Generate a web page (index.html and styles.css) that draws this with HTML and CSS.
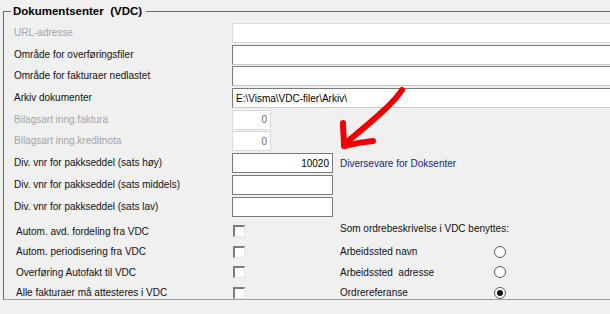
FILE: index.html
```html
<!DOCTYPE html>
<html lang="no">
<head>
    <meta charset="UTF-8">
    <title>Dokumentsenter (VDC)</title>
    <link rel="stylesheet" href="styles.css">
</head>
<body>
    <fieldset class="group">
        <legend>Dokumentsenter &nbsp;(VDC)</legend>

        <div class="fields">
            <label class="disabled">URL-adresse</label>
            <input class="wide" type="text" disabled>

            <label>Område for overføringsfiler</label>
            <input class="wide" type="text">

            <label>Område for fakturaer nedlastet</label>
            <input class="wide" type="text">

            <label>Arkiv dokumenter</label>
            <input class="wide" type="text" value="E:\Visma\VDC-filer\Arkiv\">

            <label class="disabled">Bilagsart inng.faktura</label>
            <input class="small num" type="text" value="0" disabled>

            <label class="disabled">Bilagsart inng.kreditnota</label>
            <input class="small num" type="text" value="0" disabled>

            <label>Div. vnr for pakkseddel (sats høy)</label>
            <div class="with-note">
                <input class="medium num" type="text" value="10020">
                <span class="note">Diversevare for Doksenter</span>
            </div>

            <label>Div. vnr for pakkseddel (sats middels)</label>
            <input class="medium num" type="text">

            <label>Div. vnr for pakkseddel (sats lav)</label>
            <input class="medium num" type="text">
        </div>

        <div class="options">
            <span class="opt-label">Autom. avd. fordeling fra VDC</span>
            <span class="check"></span>
            <span class="radio-head">Som ordrebeskrivelse i VDC benyttes:</span>

            <span class="opt-label">Autom. periodisering fra VDC</span>
            <span class="check"></span>
            <span>Arbeidssted navn</span>
            <span class="radio"></span>

            <span class="opt-label">Overføring Autofakt til VDC</span>
            <span class="check"></span>
            <span>Arbeidssted &nbsp;adresse</span>
            <span class="radio"></span>

            <span class="opt-label">Alle fakturaer må attesteres i VDC</span>
            <span class="check"></span>
            <span>Ordrereferanse</span>
            <span class="radio checked"></span>
        </div>
    </fieldset>

    <!-- markering lagt over skjermbildet -->
    <svg class="arrow" width="610" height="314" viewBox="0 0 610 314">
        <path d="M402 90 C393 104 372 121 347 142" />
        <path d="M343 123 C343 130 344 138 344 146 C352 144 362 142 373 141" />
    </svg>
</body>
</html>
```

FILE: styles.css
```css
html, body {
    margin: 0;
    height: 100%;
}

body {
    background: #f0f0f0;
    font-family: "Liberation Sans", Arial, sans-serif;
    font-size: 10px;
    color: #111;
    overflow: hidden;
    position: relative;
}

.group {
    margin: 5px 0 0 3px;
    padding: 0 0 10px 10px;
    border: 1px solid #a0a0a0;
    border-right: none;
    border-top-color: #6a6a6a;
    border-left-color: #6a6a6a;
    height: 295px;
    min-width: 0;
    box-sizing: border-box;
}

.group legend {
    font-weight: bold;
    font-size: 11.5px;
    line-height: 13px;
    color: #000;
    margin-left: -3px;
    padding: 0 4px 0 2px;
}

.fields {
    display: grid;
    grid-template-columns: 218px 1fr;
    grid-auto-rows: 21.7px;
    align-items: start;
    padding-top: 5px;
}

.fields label {
    line-height: 20px;
}

.disabled {
    color: #a3a3a3;
}

input {
    box-sizing: border-box;
    height: 20px;
    margin: 0;
    padding: 0 3px;
    font-family: "Liberation Sans", Arial, sans-serif;
    font-size: 10px;
    color: #000;
    background: #fff;
    border: 1px solid #7a7a7a;
    border-bottom-color: #c8c8c8;
    border-right-color: #c8c8c8;
    outline: none;
}

input:disabled {
    border-color: #dadada;
    color: #6d6d6d;
}

.wide {
    width: 100%;
    border-right: none;
}

.small {
    width: 39px;
}

.medium {
    width: 101px;
    border-right-color: #7a7a7a;
    border-bottom-color: #7a7a7a;
}

.num {
    text-align: right;
}

.with-note {
    display: flex;
    align-items: center;
    gap: 7px;
}

.note {
    color: #1c1c8c;
}

.options {
    display: grid;
    grid-template-columns: 218px 108px 153px 20px;
    grid-auto-rows: 20.5px;
    align-items: center;
    padding-top: 3px;
}

.opt-label {
    padding-left: 2px;
}

.radio-head {
    grid-column: span 2;
    margin-top: -6px;
}

.check {
    width: 12px;
    height: 12px;
    box-sizing: border-box;
    margin-left: 1px;
    background: #fff;
    border: 1px solid #e6e6e6;
    border-top: 2px solid #7c7c7c;
    border-left: 2px solid #7c7c7c;
}

.radio {
    width: 12px;
    height: 12px;
    box-sizing: border-box;
    margin-left: 1px;
    border-radius: 50%;
    background: #fff;
    border: 1px solid #5a5a5a;
    display: flex;
    align-items: center;
    justify-content: center;
}

.radio.checked::after {
    content: "";
    width: 6px;
    height: 6px;
    border-radius: 50%;
    background: #111;
}

.arrow {
    position: absolute;
    left: 0;
    top: 0;
    pointer-events: none;
}

.arrow path {
    fill: none;
    stroke: #f20000;
    stroke-width: 6;
    stroke-linecap: round;
    stroke-linejoin: round;
}
```
